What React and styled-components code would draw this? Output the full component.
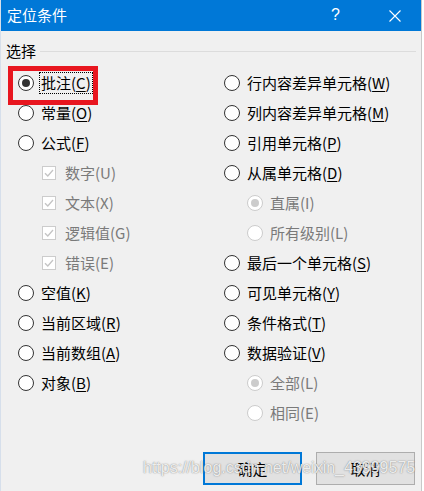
import React from "react";
import styled, { createGlobalStyle } from "styled-components";

const GlobalStyle = createGlobalStyle`
  html, body {
    margin: 0;
    padding: 0;
    background: #ffffff;
  }
  body {
    font-family: "Noto Sans CJK SC", "Noto Sans", sans-serif;
  }
`;

const DialogStyled = styled.div`
  position: relative;
  width: 422px;
  height: 491px;
  background-color: #f0f0f0;
  border-left: 1px solid #d6dfeb;
  border-right: 1px solid #c8c8c8;
  box-sizing: border-box;
  display: flex;
  flex-direction: column;
  overflow: hidden;
`;

const TitleBarStyled = styled.div`
  height: 31px;
  flex-shrink: 0;
  background-color: #0078d7;
  color: #ffffff;
  display: flex;
  align-items: center;
  padding: 0 21px 0 7px;
  margin-left: -1px;
  margin-right: -1px;
`;

const TitleTextStyled = styled.div`
  flex: 1;
  font-size: 15px;
  line-height: 20px;
  margin-top: -2px;
`;

const HelpStyled = styled.div`
  font-family: "Liberation Sans", sans-serif;
  font-size: 16px;
  line-height: 20px;
  margin-right: 49px;
  margin-top: -2px;
`;

const GroupHeaderStyled = styled.div`
  display: flex;
  align-items: center;
  gap: 4px;
  height: 20px;
  margin: 10px 5px 0 5px;
`;

const GroupLabelStyled = styled.div`
  font-size: 15px;
  line-height: 20px;
  color: #000;
`;

const GroupLineStyled = styled.div`
  flex: 1;
  height: 1px;
  background-color: #dcdcdc;
  margin-top: 1px;
`;

const ColumnsStyled = styled.div`
  display: grid;
  grid-template-columns: 206px 1fr;
  padding: 7px 0 0 17px;
`;

const ColumnStyled = styled.div`
  display: flex;
  flex-direction: column;
`;

const RowStyled = styled.div`
  position: relative;
  height: 30px;
  display: flex;
  align-items: center;
  padding-left: ${(p) => p.$indent || 0}px;
  gap: ${(p) => (p.$check ? 7 : 5)}px;
`;

const RadioStyled = styled.div`
  width: 16px;
  height: 16px;
  box-sizing: border-box;
  border-radius: 50%;
  border: 1px solid ${(p) => (p.$disabled ? "#cccccc" : "#333333")};
  background-color: #ffffff;
  display: flex;
  align-items: center;
  justify-content: center;
  flex-shrink: 0;

  &::after {
    content: "";
    display: ${(p) => (p.$checked ? "block" : "none")};
    width: 8px;
    height: 8px;
    border-radius: 50%;
    background-color: ${(p) => (p.$disabled ? "#cccccc" : "#333333")};
  }
`;

const CheckStyled = styled.div`
  width: 14px;
  height: 14px;
  box-sizing: border-box;
  border: 1px solid #cccccc;
  background-color: #ffffff;
  display: flex;
  align-items: center;
  justify-content: center;
  flex-shrink: 0;
`;

const LabelStyled = styled.div`
  font-size: 15px;
  line-height: 20px;
  color: ${(p) => (p.$disabled ? "#7a7a7a" : "#000000")};
  padding: 0 1px;
  border: 1px dotted ${(p) => (p.$focus ? "#000000" : "transparent")};
  white-space: nowrap;

  u {
    text-decoration: underline;
    text-underline-offset: 2px;
    text-decoration-thickness: 1px;
  }
`;

const HighlightStyled = styled.div`
  position: absolute;
  left: -10px;
  top: -2px;
  width: 90px;
  height: 39px;
  box-sizing: border-box;
  border: 5px solid #e8161f;
  pointer-events: none;
`;

const ButtonBarStyled = styled.div`
  display: flex;
  justify-content: flex-end;
  gap: 14px;
  margin-top: 24px;
  padding-right: 6px;
`;

const ButtonStyled = styled.div`
  width: 99px;
  height: 33px;
  box-sizing: border-box;
  background-color: #e1e1e1;
  border: ${(p) => (p.$primary ? "2px solid #0078d7" : "1px solid #adadad")};
  display: flex;
  align-items: center;
  justify-content: center;
  font-size: 15px;
  color: #000;
`;

const WatermarkStyled = styled.div`
  position: absolute;
  left: 142px;
  top: 459px;
  font-family: "Liberation Sans", sans-serif;
  font-size: 16px;
  color: rgba(255, 255, 255, 0.85);
  text-shadow: 0 0 1px rgba(90, 90, 90, 0.7), 0 0 2px rgba(140, 140, 140, 0.4);
  pointer-events: none;
  white-space: nowrap;
`;

const CloseIcon = () => (
  <svg width="12" height="12" viewBox="0 0 12 12">
    <path d="M0.5 0.5 L11.5 11.5 M11.5 0.5 L0.5 11.5" stroke="#fff" strokeWidth="1.1" fill="none" />
  </svg>
);

const CheckMark = () => (
  <svg width="10" height="10" viewBox="0 0 10 10">
    <path d="M1 5.2 L3.8 8 L9 2" stroke="#c4c4c4" strokeWidth="1.3" fill="none" />
  </svg>
);

const Label = ({ text, hotkey, disabled, focus }) => (
  <LabelStyled $disabled={disabled} $focus={focus}>
    {text}(
    {disabled ? hotkey : <u>{hotkey}</u>})
  </LabelStyled>
);

const RadioRow = ({ text, hotkey, indent, checked, disabled, children }) => (
  <RowStyled $indent={indent}>
    <RadioStyled $checked={checked} $disabled={disabled} />
    <Label text={text} hotkey={hotkey} disabled={disabled} focus={checked && !disabled} />
    {children}
  </RowStyled>
);

const CheckRow = ({ text, hotkey }) => (
  <RowStyled $indent={24} $check>
    <CheckStyled>
      <CheckMark />
    </CheckStyled>
    <Label text={text} hotkey={hotkey} disabled />
  </RowStyled>
);

const App = () => {
  return (
    <>
      <GlobalStyle />
      <DialogStyled>
        <TitleBarStyled>
          <TitleTextStyled>定位条件</TitleTextStyled>
          <HelpStyled>?</HelpStyled>
          <CloseIcon />
        </TitleBarStyled>

        <GroupHeaderStyled>
          <GroupLabelStyled>选择</GroupLabelStyled>
          <GroupLineStyled />
        </GroupHeaderStyled>

        <ColumnsStyled>
          <ColumnStyled>
            <RadioRow text="批注" hotkey="C" checked>
              <HighlightStyled />
            </RadioRow>
            <RadioRow text="常量" hotkey="O" />
            <RadioRow text="公式" hotkey="F" />
            <CheckRow text="数字" hotkey="U" />
            <CheckRow text="文本" hotkey="X" />
            <CheckRow text="逻辑值" hotkey="G" />
            <CheckRow text="错误" hotkey="E" />
            <RadioRow text="空值" hotkey="K" />
            <RadioRow text="当前区域" hotkey="R" />
            <RadioRow text="当前数组" hotkey="A" />
            <RadioRow text="对象" hotkey="B" />
          </ColumnStyled>
          <ColumnStyled>
            <RadioRow text="行内容差异单元格" hotkey="W" />
            <RadioRow text="列内容差异单元格" hotkey="M" />
            <RadioRow text="引用单元格" hotkey="P" />
            <RadioRow text="从属单元格" hotkey="D" />
            <RadioRow text="直属" hotkey="I" indent={23} checked disabled />
            <RadioRow text="所有级别" hotkey="L" indent={23} disabled />
            <RadioRow text="最后一个单元格" hotkey="S" />
            <RadioRow text="可见单元格" hotkey="Y" />
            <RadioRow text="条件格式" hotkey="T" />
            <RadioRow text="数据验证" hotkey="V" />
            <RadioRow text="全部" hotkey="L" indent={23} checked disabled />
            <RadioRow text="相同" hotkey="E" indent={23} disabled />
          </ColumnStyled>
        </ColumnsStyled>

        <ButtonBarStyled>
          <ButtonStyled $primary>确定</ButtonStyled>
          <ButtonStyled>取消</ButtonStyled>
        </ButtonBarStyled>

        <WatermarkStyled>https://blog.csdn.net/weixin_43999575</WatermarkStyled>
      </DialogStyled>
    </>
  );
};

export default App;
